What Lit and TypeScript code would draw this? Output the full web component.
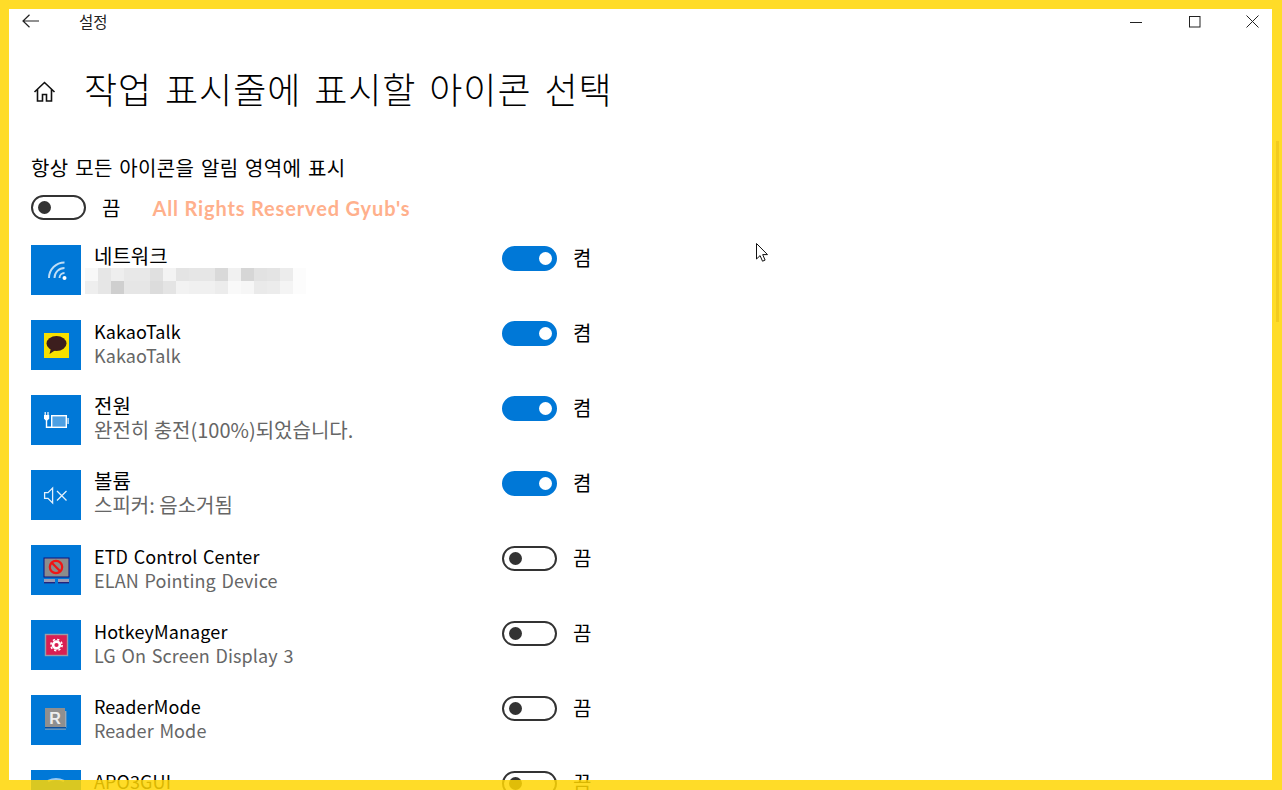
import { LitElement, html, css, svg } from 'lit';
import { customElement } from 'lit/decorators.js';

// tile glyphs, all drawn on the 50x50 blue tile
const glyphs: Record<string, unknown> = {
  wifi: svg`
    <g fill="none" stroke="#fff" stroke-width="1.9" opacity=".75">
      <path d="M28.5 33a5 5 0 0 1 5-5" />
      <path d="M23.5 33a10 10 0 0 1 10-10" />
      <path d="M18 33a15.5 15.5 0 0 1 15.5-15.5" />
    </g>
    <circle cx="33.5" cy="33" r="2" fill="#fff" />`,
  kakao: svg`
    <rect x="13" y="13" width="25" height="25" fill="#f7e000" />
    <ellipse cx="25.5" cy="23.5" rx="10" ry="7.5" fill="#3c1e1e" />
    <path d="M20 28l-1.5 6 6-4z" fill="#3c1e1e" />`,
  power: svg`
    <rect x="20.7" y="20.7" width="14.6" height="11.6" fill="#fff" fill-opacity=".3" stroke="#fff" stroke-width="1.4" />
    <path d="M15.5 25v7.3h5" fill="none" stroke="#fff" stroke-width="1.4" />
    <path d="M13 20h5.2v3.4l-1.4 1.8h-2.4L13 23.4z" fill="#fff" />
    <path d="M14.2 17v3M17 17v3" stroke="#fff" stroke-width="1.2" />
    <rect x="36.4" y="23" width="1.4" height="6" fill="#fff" opacity=".8" />`,
  volume: svg`
    <g fill="none" stroke="#fff" stroke-width="1.3" opacity=".9">
      <path d="M13.6 22.6h3.4l4.6-4.6v15l-4.6-4.6h-3.4z" />
      <path d="M26 21l9.5 9.5M35.5 21L26 30.5" />
    </g>`,
  etd: svg`
    <rect x="13" y="13" width="25" height="19" fill="#8c8c8c" stroke="#12127c" stroke-width="1" />
    <circle cx="25" cy="22" r="6.2" fill="none" stroke="#f01414" stroke-width="2.2" />
    <path d="M20.8 17.8l8.4 8.4" stroke="#f01414" stroke-width="2.2" />
    <rect x="13" y="34" width="11" height="4" fill="#9a9ab4" />
    <rect x="27" y="34" width="11" height="4" fill="#9a9ab4" />
    <rect x="13" y="37" width="11" height="1.4" fill="#23237c" />
    <rect x="27" y="37" width="11" height="1.4" fill="#23237c" />`,
  hotkey: svg`
    <rect x="14.5" y="14.5" width="22" height="21" fill="#d91f52" stroke="#9b9ba8" stroke-width="1.4" />
    <circle cx="25.5" cy="25" r="3.4" fill="none" stroke="#fff" stroke-width="2.6" />
    <circle cx="25.5" cy="25" r="5.6" fill="none" stroke="#fff" stroke-width="1.6" stroke-dasharray="2.2 2.2" />`,
  reader: svg`
    <rect x="14" y="13" width="20" height="19" fill="#8f8f8f" />
    <rect x="34" y="16" width="1.4" height="17" fill="#9aa7b4" />
    <rect x="14" y="32" width="21" height="1.6" fill="#0a4f9e" />
    <rect x="14" y="33.6" width="21" height="1" fill="#9aa7b4" />
    <text x="24" y="28.5" text-anchor="middle" font-family="Liberation Sans, sans-serif" font-size="16" font-weight="700" fill="#eee">R</text>`,
  apo: svg`<path d="M17 11q8-4 16 0" fill="none" stroke="#fff" stroke-width="2" opacity=".6" />`,
};

const ROWS = [
  { icon: 'wifi', name: '네트워크', sub: '', on: true, ko: true, subKo: false },
  { icon: 'kakao', name: 'KakaoTalk', sub: 'KakaoTalk', on: true, ko: false, subKo: false },
  { icon: 'power', name: '전원', sub: '완전히 충전(100%)되었습니다.', on: true, ko: true, subKo: true },
  { icon: 'volume', name: '볼륨', sub: '스피커: 음소거됨', on: true, ko: true, subKo: true },
  { icon: 'etd', name: 'ETD Control Center', sub: 'ELAN Pointing Device', on: false, ko: false, subKo: false },
  { icon: 'hotkey', name: 'HotkeyManager', sub: 'LG On Screen Display 3', on: false, ko: false, subKo: false },
  { icon: 'reader', name: 'ReaderMode', sub: 'Reader Mode', on: false, ko: false, subKo: false },
  { icon: 'apo', name: 'APO3GUI', sub: '', on: false, ko: false, subKo: false },
];

// the blurred-out network name, two rows of mosaic cells
const MOSAIC = [
  0xf8, 0xe6, 0xee, 0xe8, 0xe8, 0xe0, 0xf3, 0xe4, 0xe6, 0xe6, 0xd9, 0xf1, 0xd6, 0xe2, 0xe4, 0xec, 0xfc,
  0xee, 0xe6, 0xcf, 0xe6, 0xe6, 0xdc, 0xe4, 0xf2, 0xf0, 0xf0, 0xec, 0xf9, 0xf6, 0xea, 0xec, 0xf4, 0xfc,
];

@customElement('app-root')
export class AppRoot extends LitElement {
  static styles = css`
    :host {
      display: block;
      position: relative;
      width: 1282px;
      height: 790px;
      overflow: hidden;
      background: #fff;
      color: #000;
      font-family: "Noto Sans CJK KR", "Noto Sans", sans-serif;
    }
    .titlebar {
      display: flex;
      align-items: center;
      height: 42px;
      padding-left: 22px;
    }
    .back {
      width: 17px;
      height: 14px;
    }
    .app-name {
      margin-left: 40px;
      font-size: 15.5px;
      line-height: 18px;
      color: #222;
    }
    .winctl {
      display: flex;
      align-items: center;
      gap: 45px;
      margin-left: auto;
      padding-right: 23px;
    }
    .winctl svg {
      display: block;
      width: 13px;
      height: 13px;
    }
    .head {
      display: flex;
      align-items: center;
      height: 94px;
      padding-left: 33px;
    }
    .home {
      width: 23px;
      height: 23px;
      margin-top: 5px;
    }
    h1 {
      margin: -2px 0 0 28px;
      font-size: 36px;
      font-weight: 300;
      line-height: 44px;
      letter-spacing: 0.9px;
      word-spacing: 4.2px;
    }
    .label {
      height: 24px;
      margin: 20px 0 0 31px;
      font-size: 20px;
      line-height: 24px;
      letter-spacing: 0.3px;
      word-spacing: 2px;
    }
    .master {
      display: flex;
      align-items: center;
      gap: 16px;
      height: 25px;
      margin: 15px 0 0 31px;
    }
    .mark {
      margin-left: 16px;
      font-family: Lato, sans-serif;
      font-size: 20px;
      font-weight: 700;
      letter-spacing: 0.85px;
      color: #ffb08c;
    }
    .state {
      font-size: 20px;
      line-height: 24px;
    }
    .toggle {
      position: relative;
      box-sizing: border-box;
      width: 55px;
      height: 25px;
      border: 2px solid #333;
      border-radius: 13px;
      background: #fff;
    }
    .toggle::after {
      content: '';
      position: absolute;
      top: 4px;
      left: 5px;
      width: 13px;
      height: 13px;
      border-radius: 50%;
      background: #333;
    }
    .toggle.on {
      border-color: #0078d7;
      background: #0078d7;
    }
    .toggle.on::after {
      left: 35px;
      background: #fff;
    }
    .list {
      display: grid;
      grid-auto-rows: 75px;
      margin-top: 25px;
      padding-left: 31px;
    }
    .row {
      display: grid;
      grid-template-columns: 50px 394px auto;
      column-gap: 13px;
      align-items: start;
    }
    .row .ctl {
      margin-left: 1px;
    }
    .tile {
      width: 50px;
      height: 50px;
      background: #0078d7;
    }
    .tile svg {
      display: block;
      width: 50px;
      height: 50px;
    }
    .copy {
      margin-top: -1px;
    }
    .name,
    .sub {
      font-size: 18px;
      line-height: 24px;
      letter-spacing: 0.1px;
      word-spacing: 1.5px;
      white-space: nowrap;
    }
    .name.ko,
    .sub.ko {
      font-size: 20px;
      letter-spacing: 0;
      word-spacing: 0;
    }
    .sub {
      color: #666;
    }
    .mosaic {
      display: grid;
      grid-template-columns: repeat(17, 13px);
      grid-auto-rows: 13px;
      margin: 0 0 0 -9px;
    }
    .ctl {
      display: flex;
      gap: 16px;
      margin-top: 1px;
    }
    .frame {
      position: absolute;
      inset: 0;
      box-sizing: border-box;
      border-style: solid;
      border-width: 9px 10px 10px 9px;
      border-color: rgba(255, 214, 2, 0.85);
      pointer-events: none;
    }
    .scroll {
      position: absolute;
      top: 141px;
      left: 1276px;
      width: 3px;
      height: 181px;
      background: #f2cb1e;
    }
    .cursor {
      position: absolute;
      top: 243px;
      left: 756px;
      width: 13px;
      height: 20px;
    }
  `;

  private toggle(on: boolean) {
    return html`
      <div class="toggle ${on ? 'on' : ''}"></div>
      <div class="state">${on ? '켬' : '끔'}</div>
    `;
  }

  render() {
    return html`
      <div class="titlebar">
        <svg class="back" viewBox="0 0 17 14" fill="none" stroke="#222" stroke-width="1.2">
          <path d="M1 7h16M7.5 .8L1 7l6.5 6.2" />
        </svg>
        <div class="app-name">설정</div>
        <div class="winctl">
          <svg viewBox="0 0 13 13" stroke="#222" fill="none"><path d="M0 7.5h12" /></svg>
          <svg viewBox="0 0 13 13" stroke="#222" fill="none"><rect x="1.5" y="1.5" width="10.5" height="10.5" /></svg>
          <svg viewBox="0 0 13 13" stroke="#222" fill="none"><path d="M.5 .5l12 12M12.5 .5l-12 12" /></svg>
        </div>
      </div>
      <div class="head">
        <svg class="home" viewBox="0 0 23 23" fill="none" stroke="#111" stroke-width="1.6">
          <path d="M1.5 12L11.5 2.5 21.5 12M4.5 9.5V21h5v-6.5h4V21h5V9.5" />
        </svg>
        <h1>작업 표시줄에 표시할 아이콘 선택</h1>
      </div>
      <div class="label">항상 모든 아이콘을 알림 영역에 표시</div>
      <div class="master">
        ${this.toggle(false)}
        <div class="mark">All Rights Reserved Gyub's</div>
      </div>
      <div class="list">
        ${ROWS.map(
          (r) => html`
            <div class="row">
              <div class="tile"><svg viewBox="0 0 50 50">${glyphs[r.icon]}</svg></div>
              <div class="copy">
                <div class="name ${r.ko ? 'ko' : ''}">${r.name}</div>
                ${r.icon === 'wifi'
                  ? html`<div class="mosaic">
                      ${MOSAIC.map((v) => html`<div style="background:rgb(${v},${v},${v})"></div>`)}
                    </div>`
                  : html`<div class="sub ${r.subKo ? 'ko' : ''}">${r.sub}</div>`}
              </div>
              <div class="ctl">${this.toggle(r.on)}</div>
            </div>
          `
        )}
      </div>
      <div class="frame"></div>
      <div class="scroll"></div>
      <svg class="cursor" viewBox="0 0 13 20">
        <path d="M.5 .5v15.5l3.6-3.4 2.4 5.6 2.6-1.1-2.4-5.5h4.8z" fill="#fff" stroke="#111" stroke-width="1" />
      </svg>
    `;
  }
}
